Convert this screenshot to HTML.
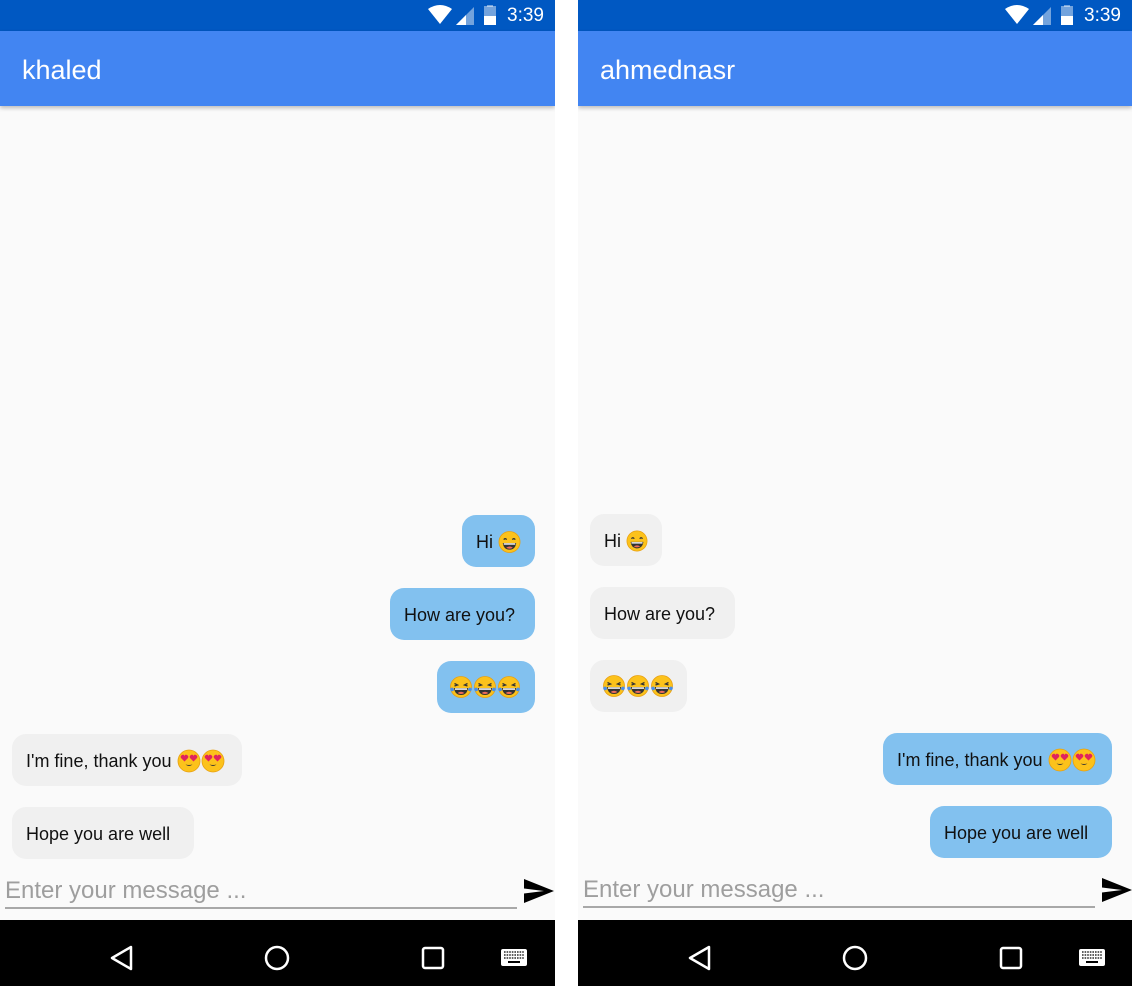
<!DOCTYPE html>
<html><head><meta charset="utf-8"><style>
*{margin:0;padding:0;box-sizing:border-box}
body{width:1132px;height:986px;background:#fff;position:relative;overflow:hidden;font-family:"Liberation Sans",sans-serif}
.ph{position:absolute;top:0;width:555px;height:986px;background:#fafafa;overflow:hidden}
.sb{position:absolute;left:0;top:0;width:100%;height:31px;background:#0058c2}
.ab{position:absolute;left:0;top:31px;width:100%;height:75px;background:#4285f2;box-shadow:0 2px 4px rgba(0,0,0,.25)}
.ab span{position:absolute;left:22px;top:24px;color:#fff;font-size:27px}
.time{position:absolute;right:11px;top:5px;color:#fff;font-size:19px}
.nav{position:absolute;left:0;top:920px;width:100%;height:66px;background:#000}
.b{position:absolute;height:52px;border-radius:14px;font-size:18px;line-height:52px;padding:1px 14px 0;color:#111;white-space:nowrap;display:flex;align-items:center}
.me{background:#82c1ef}.th{background:#f0f0f0}
.in{position:absolute;left:5px;top:874px;width:512px;height:35px;border-bottom:2px solid #a8a8a8;color:#9e9e9e;font-size:24px;padding-top:3px}
.send{position:absolute;left:524px;top:879px}
.b svg{width:24px;height:24px;display:inline-block}
.b svg.s{margin-left:5px}
</style></head><body>
<svg width="0" height="0" style="position:absolute">
<defs>
<symbol id="grin" viewBox="0 0 24 24"><circle cx="12" cy="12" r="11" fill="#fcc21b" stroke="#e8a010" stroke-width=".8"/><path d="M6 9.5q1.5-2 3 0M15 9.5q1.5-2 3 0" stroke="#333" stroke-width="1.4" fill="none"/><path d="M5 13h14q-1 7-7 7t-7-7z" fill="#333"/><path d="M6 13.3h12v1.5H6z" fill="#fff"/><path d="M8.5 18q3.5 2 7 0q-3.5-2.5-7 0z" fill="#ef6c5a"/></symbol>
<symbol id="joy" viewBox="0 0 24 24"><circle cx="12" cy="12" r="10.5" fill="#fcc21b" stroke="#e8a010" stroke-width=".8"/><path d="M5.5 8.5l3 1.5-3 1M18.5 8.5l-3 1.5 3 1" stroke="#333" stroke-width="1.3" fill="none"/><path d="M5 13h14q-1 7-7 7t-7-7z" fill="#333"/><path d="M6 13.3h12v1.5H6z" fill="#fff"/><path d="M8.5 18q3.5 2 7 0q-3.5-2.5-7 0z" fill="#ef6c5a"/><path d="M1 14q2-3 4 0q0 3-3 2zM23 14q-2-3-4 0q0 3 3 2z" fill="#4a8ee8"/></symbol>
<symbol id="love" viewBox="0 0 24 24"><circle cx="12" cy="12" r="11" fill="#fcc21b" stroke="#e8a010" stroke-width=".8"/><path d="M7.5 12.5l-3.5-3.5q-1-2 1-3t2.5 1q.5-2 2.5-1t1 3z" fill="#e0245e"/><path d="M16.5 12.5l-3.5-3.5q-1-2 1-3t2.5 1q.5-2 2.5-1t1 3z" fill="#e0245e"/><path d="M8.5 15.5q3.5 3 7 0q-3.5 1-7 0z" fill="#333"/></symbol>
<symbol id="snd" viewBox="0 0 30 24"><path d="M0 0L30 12L0 24L0 14.5L20 12L0 9.5z" fill="#000"/></symbol>
<symbol id="stat" viewBox="0 0 110 22"><path d="M0 4q12-8 24 0L12 19z" fill="#fff"/><path d="M28 20L46 2V20z" fill="#fff" opacity=".45"/><path d="M28 20L38 10V20z" fill="#fff"/><rect x="56" y="1" width="12" height="19" fill="#fff" opacity=".45"/><rect x="59" y="0" width="6" height="2" fill="#fff" opacity=".45"/><rect x="56" y="11" width="12" height="9" fill="#fff"/></symbol>
<symbol id="navs" viewBox="0 0 555 66"><path d="M131 27L112 38L131 49z" fill="none" stroke="#fff" stroke-width="2.5" stroke-linejoin="round"/><circle cx="277" cy="38" r="11" fill="none" stroke="#fff" stroke-width="2.5"/><rect x="423" y="28" width="20" height="20" rx="2" fill="none" stroke="#fff" stroke-width="2.5"/><rect x="501" y="29" width="26" height="17" rx="2" fill="#fff"/><path d="M504 32h20M504 35h20M504 38h20" stroke="#000" stroke-width="1.3" stroke-dasharray="1.6 1"/><rect x="508" y="41" width="12" height="2" fill="#000"/></symbol>
</defs></svg>

<div class="ph" style="left:0">
<div class="sb"><svg style="position:absolute;left:428px;top:5px" width="110" height="22"><use href="#stat"/></svg><span class="time">3:39</span></div>
<div class="ab"><span>khaled</span></div>
<div class="b me" style="left:462px;top:515px;width:73px">Hi<svg class="s"><use href="#grin"/></svg></div>
<div class="b me" style="left:390px;top:588px;width:145px">How are you?</div>
<div class="b me" style="left:437px;top:661px;width:98px;padding:0 12px"><svg><use href="#joy"/></svg><svg><use href="#joy"/></svg><svg><use href="#joy"/></svg></div>
<div class="b th" style="left:12px;top:734px;width:230px">I'm fine, thank you<svg class="s"><use href="#love"/></svg><svg><use href="#love"/></svg></div>
<div class="b th" style="left:12px;top:807px;width:182px">Hope you are well</div>
<div class="in">Enter your message ...</div>
<svg class="send" width="30" height="24"><use href="#snd"/></svg>
<div class="nav"><svg width="555" height="66"><use href="#navs"/></svg></div>
</div>

<div class="ph" style="left:578px;width:554px">
<div class="sb"><svg style="position:absolute;left:427px;top:5px" width="110" height="22"><use href="#stat"/></svg><span class="time">3:39</span></div>
<div class="ab"><span>ahmednasr</span></div>
<div class="b th" style="left:12px;top:514px;width:72px">Hi<svg class="s"><use href="#grin"/></svg></div>
<div class="b th" style="left:12px;top:587px;width:145px">How are you?</div>
<div class="b th" style="left:12px;top:660px;width:97px;padding:0 12px"><svg><use href="#joy"/></svg><svg><use href="#joy"/></svg><svg><use href="#joy"/></svg></div>
<div class="b me" style="left:305px;top:733px;width:229px">I'm fine, thank you<svg class="s"><use href="#love"/></svg><svg><use href="#love"/></svg></div>
<div class="b me" style="left:352px;top:806px;width:182px">Hope you are well</div>
<div class="in" style="top:873px">Enter your message ...</div>
<svg class="send" style="top:878px" width="30" height="24"><use href="#snd"/></svg>
<div class="nav"><svg width="555" height="66"><use href="#navs"/></svg></div>
</div>
</body></html>
